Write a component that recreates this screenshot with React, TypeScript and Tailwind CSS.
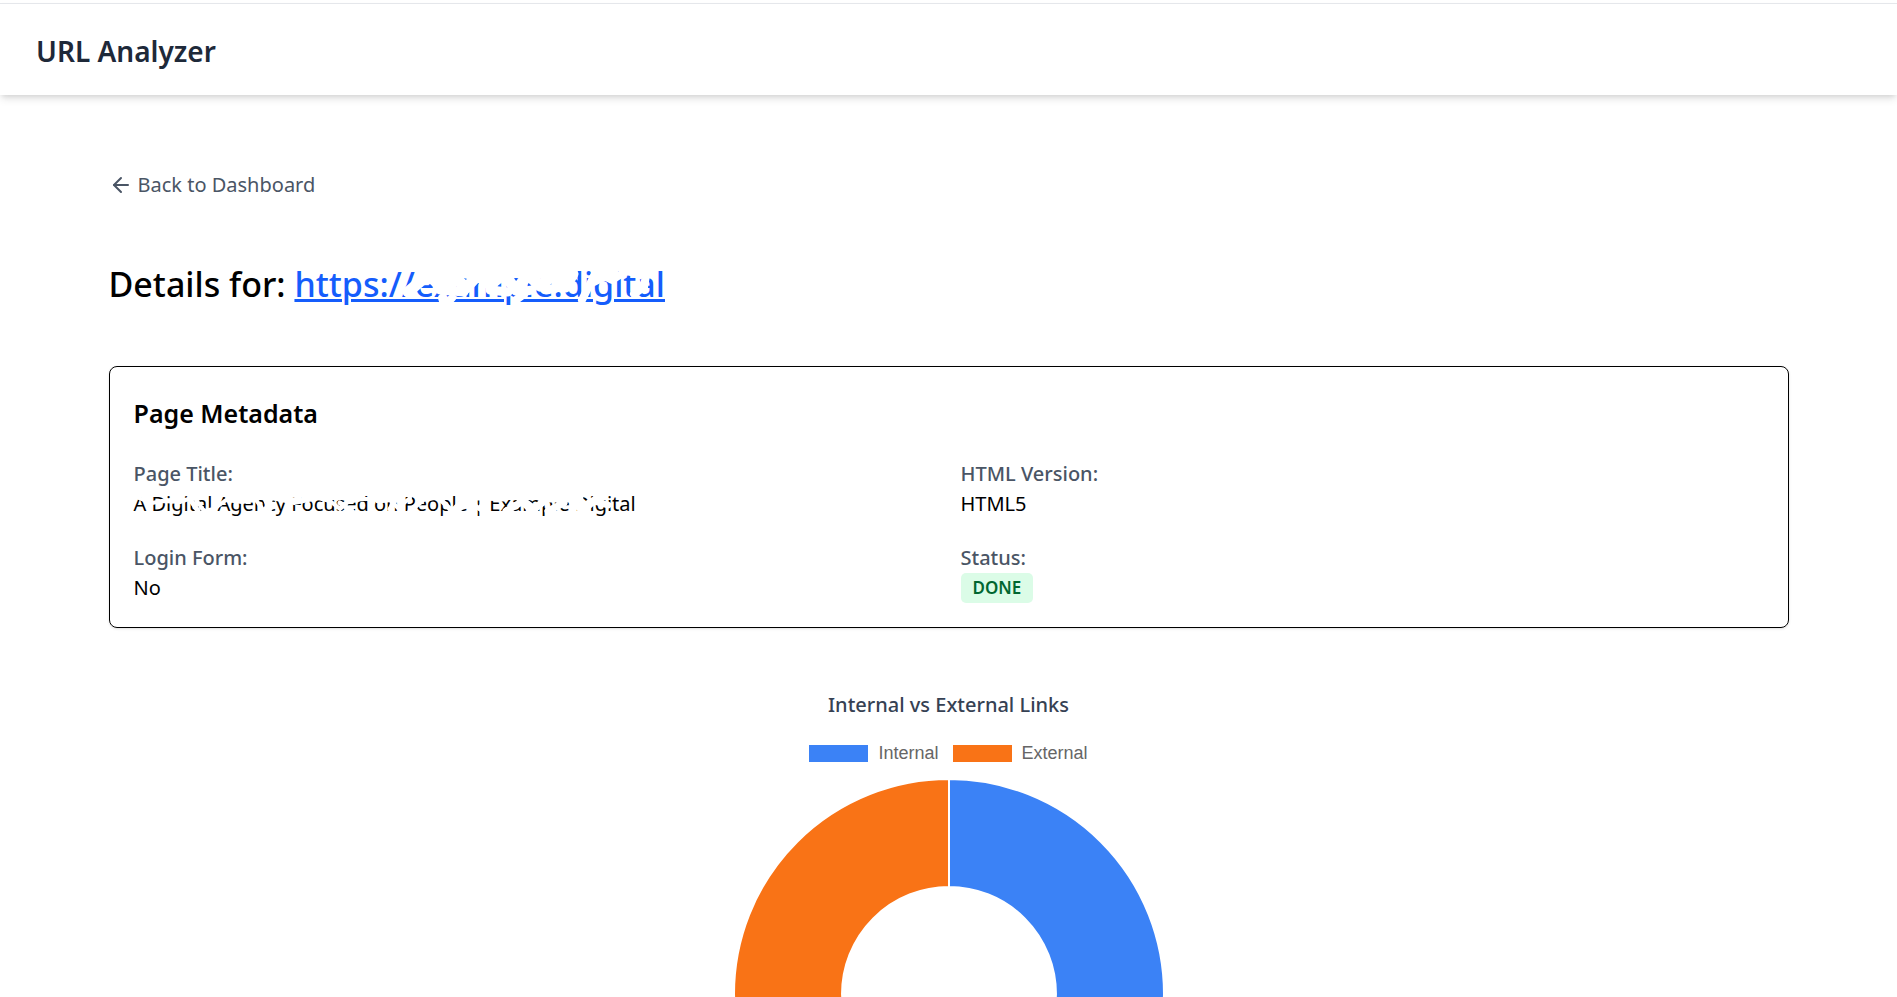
import { ArrowLeft } from "lucide-react";
import type { ReactNode } from "react";

function Field({ label, children }: { label: string; children: ReactNode }) {
  return (
    <div>
      <dt className="font-medium text-gray-600">{label}</dt>
      <dd className="flex">{children}</dd>
    </div>
  );
}

function LegendItem({ swatch, label }: { swatch: string; label: string }) {
  return (
    <li className="flex items-center gap-2.5">
      <span className={`h-[17px] w-[59px] ${swatch}`} />
      {label}
    </li>
  );
}

function LinksChart() {
  return (
    <svg viewBox="-216 -216 432 432" className="mt-[11px] w-[432px]" role="img" aria-label="Internal vs External Links">
      <g stroke="#fff" strokeWidth="2">
        <path d="M0-215A215 215 0 0 1 0 215V107A107 107 0 0 0 0-107Z" fill="#3b82f6" />
        <path d="M0-215A215 215 0 0 0 0 215V107A107 107 0 0 1 0-107Z" fill="#f97316" />
      </g>
    </svg>
  );
}

export default function App() {
  return (
    <div className="bg-white pt-[3px] font-['Noto_Sans',sans-serif] text-black">
      <header className="border-t border-gray-200 bg-white px-9 pt-[31px] pb-7 shadow-[0_5px_8px_-1px_rgb(0_0_0/0.1),0_3px_5px_-2px_rgb(0_0_0/0.1)]">
        <p className="text-[28px] leading-8 font-semibold text-gray-800">URL Analyzer</p>
      </header>

      <main className="mx-auto max-w-[1680px] pt-[76px]">
        <a href="#dashboard" className="flex w-fit items-center gap-[5px] text-xl leading-7 text-gray-600">
          <ArrowLeft size={24} strokeWidth={2} />
          Back to Dashboard
        </a>

        <h1 className="mt-[65px] text-[34px] leading-10 font-medium">
          Details for:{" "}
          <span className="relative inline-block">
            <a href="#site" className="text-[#155dfc] underline decoration-3">
              https://example.digital
            </a>
            <svg
              viewBox="0 0 371 46"
              className="pointer-events-none absolute -top-1.5 left-0 h-[46px] w-[371px]"
              fill="none"
              stroke="#fff"
              strokeLinecap="round"
              strokeLinejoin="round"
              aria-hidden="true"
            >
              <path
                d="M114 34L128 22L138 20L148 30L160 18L172 30L184 17L196 27L210 16L222 32L234 17L246 28L258 18L268 28"
                strokeWidth="11"
              />
              <path d="M138 14L264 13M146 32L170 34M196 32L214 34M226 34L238 32M252 32L262 30M272 30L280 16" strokeWidth="9" />
              <path d="M148 40L150 46M158 40L152 46M222 42L230 36M288 42L302 14L318 22L332 13L352 17L350 29L340 36M300 24L320 14" strokeWidth="8" />
            </svg>
          </span>
        </h1>

        <section className="mt-[62px] rounded-lg border border-black px-6 pt-7 pb-6 shadow-sm">
          <h2 className="text-[25px] leading-9 font-semibold">Page Metadata</h2>
          <dl className="mt-7 grid grid-cols-2 gap-6 text-xl leading-[30px]">
            <Field label="Page Title:">
              <span className="relative">
                A Digital Agency Focused on People | Example Digital
                <svg
                  viewBox="0 0 494 30"
                  className="pointer-events-none absolute top-0 left-0 h-[30px] w-[494px]"
                  fill="none"
                  stroke="#fff"
                  strokeLinecap="round"
                  strokeLinejoin="round"
                  aria-hidden="true"
                >
                  <path
                    d="M2 8L18 14L28 12L46 13L60 8L70 22L80 20L92 11L108 13L122 11L130 22L138 9L152 12L166 9M160 14L184 9L196 12L206 20L214 13L228 10L240 10L254 9L264 19L276 9"
                    strokeWidth="4"
                  />
                  <path
                    d="M56 10L64 22M132 12L136 20M206 14L218 22M244 12L262 10L256 20M276 22L290 10L304 8L318 22L330 10L346 20L352 9L370 10M376 20L390 11L402 20L416 9L440 10L446 18L462 9"
                    strokeWidth="5"
                  />
                  <path d="M324 20L340 8H366M372 22L386 14M384 8L398 22L412 10H446M414 22L430 14M436 8L448 22L460 12L474 16" strokeWidth="7" />
                </svg>
              </span>
            </Field>
            <Field label="HTML Version:">HTML5</Field>
            <Field label="Login Form:">No</Field>
            <Field label="Status:">
              <span className="rounded-[5px] bg-green-100 px-3 text-[17px] font-semibold text-green-800">DONE</span>
            </Field>
          </dl>
        </section>

        <section className="mt-[63px] flex flex-col items-center">
          <h3 className="text-xl leading-7 font-medium text-gray-700">Internal vs External Links</h3>
          <ul className="mt-5 flex gap-3.5 font-['Liberation_Sans',Arial,sans-serif] text-lg text-[#666]">
            <LegendItem swatch="bg-[#3b82f6]" label="Internal" />
            <LegendItem swatch="bg-[#f97316]" label="External" />
          </ul>
          <LinksChart />
        </section>
      </main>
    </div>
  );
}
